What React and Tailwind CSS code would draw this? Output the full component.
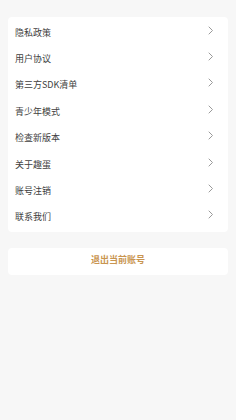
const ITEMS = ['隐私政策', '用户协议', '第三方SDK清单', '青少年模式', '检查新版本', '关于趣蛋', '账号注销', '联系我们']

function Chevron() {
  return (
    <svg width="6" height="9" viewBox="0 0 6 9" fill="none" className="mb-[4px]">
      <path d="M1 1l3.5 3.5L1 8" stroke="#9a9a9a" strokeWidth="1" strokeLinecap="round" strokeLinejoin="round" />
    </svg>
  )
}

export default function App() {
  return (
    <div
      className="flex h-[420px] w-[236px] flex-col bg-[#f7f7f7] px-[8px] pt-[17px]"
      style={{ fontFamily: '"Noto Sans CJK SC", "Noto Sans", sans-serif' }}
    >
      <div className="flex flex-col rounded-[4px] bg-white py-[2px]">
        {ITEMS.map((label) => (
          <div key={label} className="flex h-[26.4px] items-center justify-between pl-[7px] pr-[14px]">
            <span className="text-[9px] leading-none text-[#404040]">{label}</span>
            <Chevron />
          </div>
        ))}
      </div>
      <div className="mt-[16px] flex h-[27px] items-center justify-center rounded-[4px] bg-white pb-[4px]">
        <span className="text-[9px] font-bold leading-none text-[#c99550]">退出当前账号</span>
      </div>
    </div>
  )
}
